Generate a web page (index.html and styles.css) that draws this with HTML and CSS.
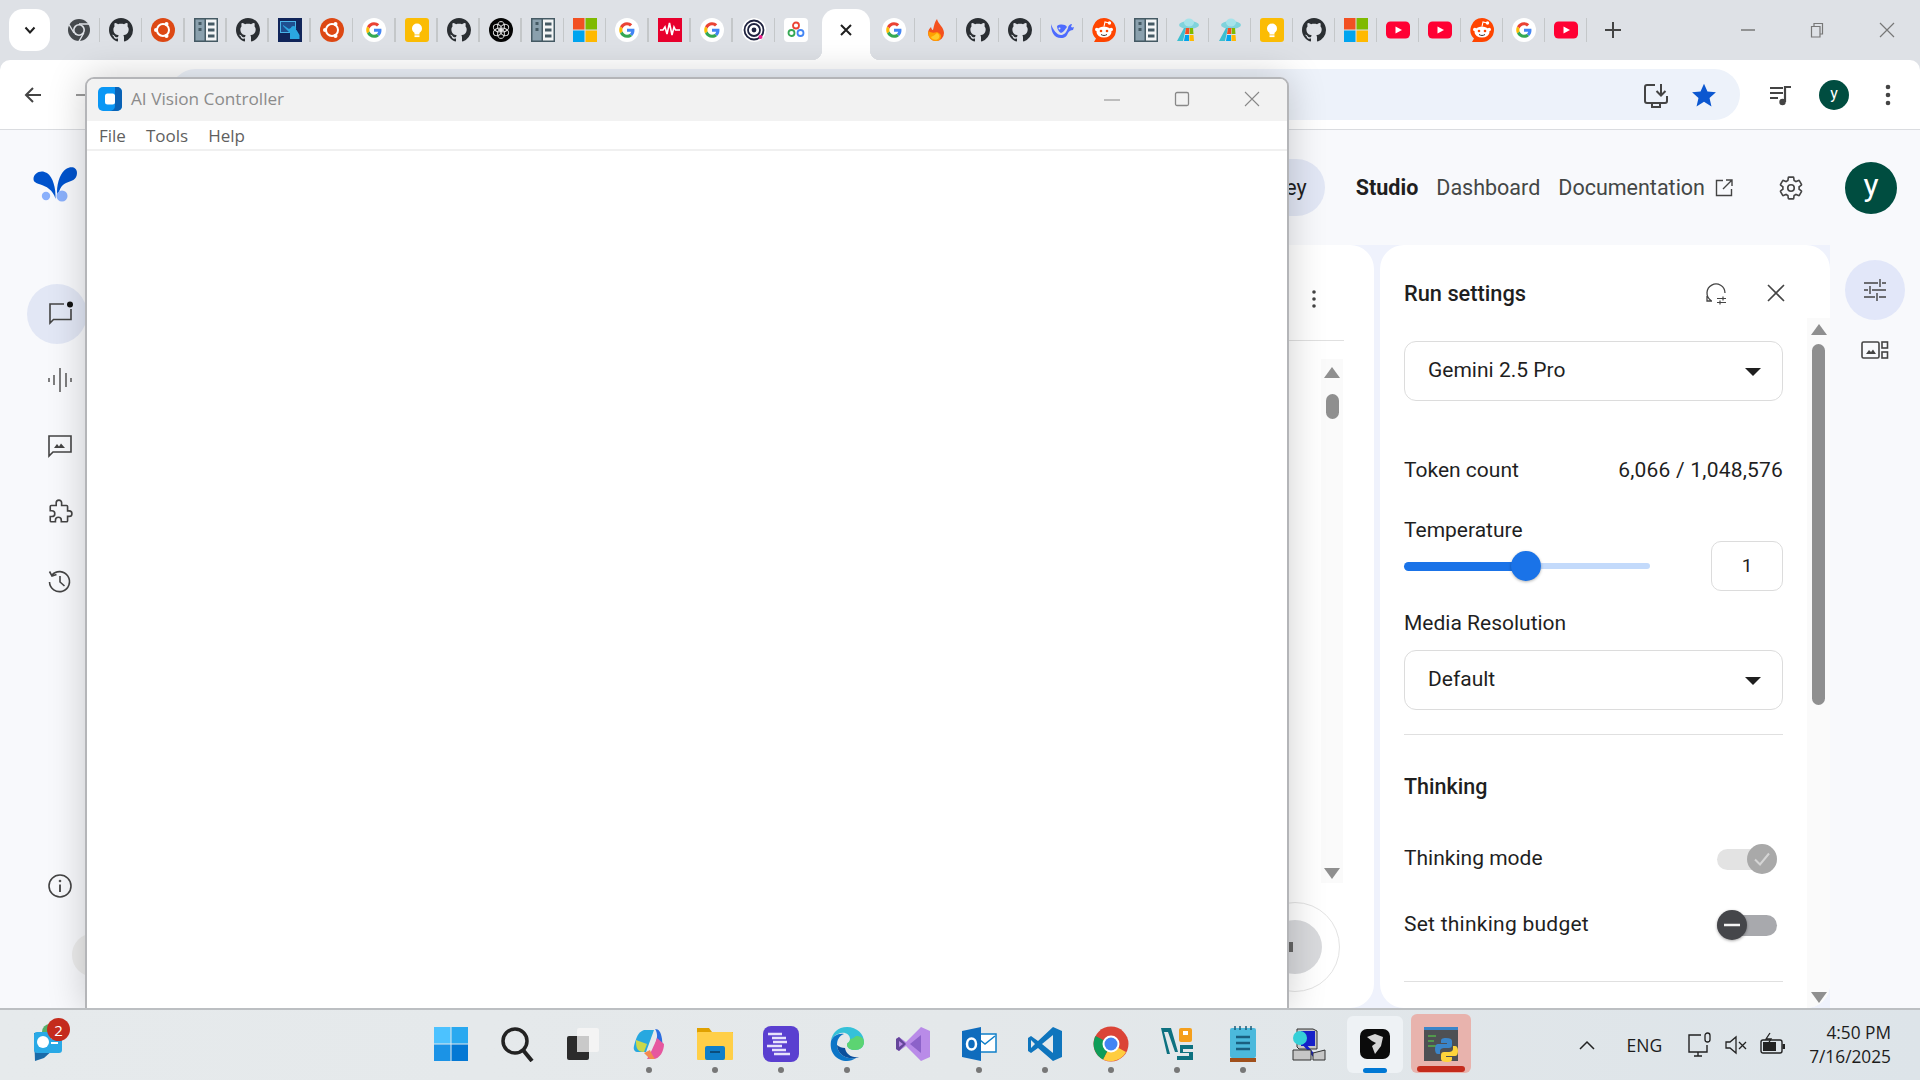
FILE: index.html
```html
<!DOCTYPE html>
<html lang="en">

<head>
  <meta charset="UTF-8">
  <title>AI Vision Controller</title>
  <link rel="stylesheet" href="styles.css">
</head>

<body>
  <!-- favicon and app icon sprites -->
  <svg class="sprites" xmlns="http://www.w3.org/2000/svg">
    <symbol id="gh" viewBox="0 0 16 16">
      <path fill="#2b2f33" d="M8 0C3.58 0 0 3.58 0 8c0 3.54 2.29 6.53 5.47 7.59.4.07.55-.17.55-.38 0-.19-.01-.82-.01-1.49-2.01.37-2.53-.49-2.69-.94-.09-.23-.48-.94-.82-1.13-.28-.15-.68-.52-.01-.53.63-.01 1.08.58 1.23.82.72 1.21 1.87.87 2.33.66.07-.52.28-.87.51-1.07-1.78-.2-3.64-.89-3.64-3.95 0-.87.31-1.59.82-2.15-.08-.2-.36-1.02.08-2.12 0 0 .67-.21 2.2.82.64-.18 1.32-.27 2-.27s1.36.09 2 .27c1.53-1.04 2.2-.82 2.2-.82.44 1.1.16 1.92.08 2.12.51.56.82 1.27.82 2.15 0 3.07-1.87 3.75-3.65 3.95.29.25.54.73.54 1.48 0 1.07-.01 1.93-.01 2.2 0 .21.15.46.55.38A8.013 8.013 0 0016 8c0-4.42-3.58-8-8-8z" />
    </symbol>
    <symbol id="google" viewBox="0 0 24 24">
      <circle cx="12" cy="12" r="12" fill="#fff" />
      <g transform="translate(4.2 4.2) scale(.325)">
        <path fill="#EA4335" d="M24 9.5c3.54 0 6.71 1.22 9.21 3.6l6.85-6.85C35.9 2.38 30.47 0 24 0 14.62 0 6.51 5.38 2.56 13.22l7.98 6.19C12.43 13.72 17.74 9.5 24 9.5z" />
        <path fill="#4285F4" d="M46.98 24.55c0-1.57-.15-3.09-.38-4.55H24v9.02h12.94c-.58 2.96-2.26 5.48-4.78 7.18l7.73 6c4.51-4.18 7.09-10.36 7.09-17.65z" />
        <path fill="#FBBC05" d="M10.53 28.59c-.48-1.45-.76-2.99-.76-4.59s.27-3.14.76-4.59l-7.98-6.19C.92 16.46 0 20.12 0 24c0 3.88.92 7.54 2.56 10.78l7.97-6.19z" />
        <path fill="#34A853" d="M24 48c6.48 0 11.93-2.13 15.89-5.81l-7.73-6c-2.15 1.45-4.92 2.3-8.16 2.3-6.26 0-11.57-4.22-13.47-9.91l-7.98 6.19C6.51 42.62 14.62 48 24 48z" />
      </g>
    </symbol>
    <symbol id="chromedark" viewBox="0 0 24 24">
      <circle cx="12" cy="12" r="11" fill="#45494d" />
      <circle cx="12" cy="12" r="6" fill="#dee1e6" />
      <circle cx="12" cy="12" r="4.4" fill="#45494d" />
      <path d="M12 6h10M7 15L2 6.5M16.8 15l-5 8.6" stroke="#dee1e6" stroke-width="1.4" />
    </symbol>
    <symbol id="ubuntu" viewBox="0 0 24 24">
      <circle cx="12" cy="12" r="12" fill="#dd4814" />
      <circle cx="12" cy="12" r="6" fill="none" stroke="#fff" stroke-width="2" />
      <circle cx="5" cy="12" r="2" fill="#fff" />
      <circle cx="15.5" cy="5.9" r="2" fill="#fff" />
      <circle cx="15.5" cy="18.1" r="2" fill="#fff" />
    </symbol>
    <symbol id="tile" viewBox="0 0 24 24">
      <rect width="24" height="24" fill="#455a64" />
      <rect x="1.5" y="1.5" width="9" height="21" fill="#8aa0ad" />
      <rect x="12" y="1.5" width="10.5" height="21" fill="#f3f5f6" />
      <path d="M4.5 4h3v3h-3zM4.5 10h3v3h-3zM14 4.5h6.5v3H14zM14 10.5h6.5v3H14zM14 16.5h6.5v3H14z" fill="#455a64" />
    </symbol>
    <symbol id="board" viewBox="0 0 24 24">
      <rect width="24" height="24" fill="#11255a" />
      <rect x="2.5" y="3.5" width="15" height="11" fill="#1f4f8f" stroke="#49b3e8" />
      <circle cx="15.5" cy="10.5" r="2.6" fill="#2ba6e0" />
      <path d="M5 7l6 4 1.5-1 3 2h3l3 5v4H12v-6L5 8z" fill="#2ba6e0" />
    </symbol>
    <symbol id="keep" viewBox="0 0 24 24">
      <rect width="24" height="24" rx="3" fill="#fbbc04" />
      <circle cx="12" cy="10.5" r="5" fill="#fff" />
      <rect x="9.5" y="14" width="5" height="2.5" fill="#fff" />
      <rect x="9.5" y="17.3" width="5" height="1.8" fill="#fff" />
    </symbol>
    <symbol id="openai" viewBox="0 0 24 24">
      <circle cx="12" cy="12" r="12" fill="#050505" />
      <g fill="none" stroke="#e8e8e8" stroke-width="1">
        <ellipse cx="12" cy="8.2" rx="3.4" ry="4.6" />
        <ellipse cx="12" cy="8.2" rx="3.4" ry="4.6" transform="rotate(60 12 12)" />
        <ellipse cx="12" cy="8.2" rx="3.4" ry="4.6" transform="rotate(120 12 12)" />
        <ellipse cx="12" cy="8.2" rx="3.4" ry="4.6" transform="rotate(180 12 12)" />
        <ellipse cx="12" cy="8.2" rx="3.4" ry="4.6" transform="rotate(240 12 12)" />
        <ellipse cx="12" cy="8.2" rx="3.4" ry="4.6" transform="rotate(300 12 12)" />
      </g>
    </symbol>
    <symbol id="ms" viewBox="0 0 24 24">
      <rect width="11.5" height="11.5" fill="#f25022" />
      <rect x="12.5" width="11.5" height="11.5" fill="#7fba00" />
      <rect y="12.5" width="11.5" height="11.5" fill="#00a4ef" />
      <rect x="12.5" y="12.5" width="11.5" height="11.5" fill="#ffb900" />
    </symbol>
    <symbol id="wave" viewBox="0 0 24 24">
      <rect width="24" height="24" fill="#e8002d" />
      <path d="M2 12h3l2-3 2 7 2.500-11 2.500 12 2-8 1.500 3H22" fill="none" stroke="#fff" stroke-width="1.600" />
    </symbol>
    <symbol id="target" viewBox="0 0 24 24">
      <circle cx="12" cy="12" r="12" fill="#fff" />
      <circle cx="12" cy="12" r="9.500" fill="none" stroke="#1f2340" stroke-width="1.800" />
      <circle cx="12" cy="12" r="6" fill="none" stroke="#1f2340" stroke-width="1.800" />
      <circle cx="12" cy="12" r="2.400" fill="#1f2340" />
      <circle cx="18.500" cy="19" r="2" fill="#ee1d8c" />
    </symbol>
    <symbol id="loops" viewBox="0 0 24 24">
      <rect width="24" height="24" rx="4" fill="#fff" />
      <circle cx="12" cy="7.500" r="3" fill="none" stroke="#ea4335" stroke-width="1.800" />
      <circle cx="7.500" cy="15" r="3" fill="none" stroke="#34a853" stroke-width="1.800" />
      <circle cx="16.500" cy="15" r="3" fill="none" stroke="#4285f4" stroke-width="1.800" />
    </symbol>
    <symbol id="fire" viewBox="0 0 24 24">
      <path d="M13 1c1 5 7 8 7 14a8 8 0 0 1-16 0c0-3 2-5 3-6 .5 2 1 3 2 3 1-3 1-7 4-11z" fill="#f4511e" />
      <path d="M4.500 13c-1 5 2 10 7.500 10 3 0 5-2 5-5 0-2-2-3-4-4-3 1-6 1-8.500-1z" fill="#ffa000" />
      <path d="M7 19c1 3 6 4 8 1 1-2 0-4-2-5-2 2-4 3-6 4z" fill="#ffca28" />
    </symbol>
    <symbol id="whale" viewBox="0 0 24 24">
      <path d="M1 6c0 8 3 14 10 14 4 0 6-2 7-5 1-2 3-3 5-3l1-3c-1 .5-2 .5-3 0l1-3c-2 0-4 2-4 4-2 5-4 7-7 7C7 17 3 12 1 6z" fill="#4d6bfe" />
      <path d="M7 8c3-2 8-2 10 1-2 2-3 5-6 6-2-1-4-4-4-7z" fill="#4d6bfe" />
      <circle cx="9.500" cy="10.500" r="1" fill="#dee1e6" />
    </symbol>
    <symbol id="reddit" viewBox="0 0 24 24">
      <path d="M12 0a12 12 0 0 1 0 24H2l2-3.500A12 12 0 0 1 12 0z" fill="#ff4500" />
      <ellipse cx="12" cy="14" rx="7.500" ry="5.500" fill="#fff" />
      <circle cx="4.800" cy="11.500" r="1.800" fill="#fff" />
      <circle cx="19.200" cy="11.500" r="1.800" fill="#fff" />
      <circle cx="9" cy="13" r="1.300" fill="#ff4500" />
      <circle cx="15" cy="13" r="1.300" fill="#ff4500" />
      <path d="M9 16.500c2 1.300 4 1.300 6 0" stroke="#333" fill="none" />
      <path d="M12 8.500L13 4l4 1" stroke="#fff" fill="none" stroke-width="1.100" />
      <circle cx="17.500" cy="5" r="1.700" fill="#fff" />
    </symbol>
    <symbol id="ufo" viewBox="0 0 24 24">
      <ellipse cx="13" cy="7" rx="10" ry="4" fill="#7fd3dc" />
      <ellipse cx="13" cy="4.500" rx="5" ry="4" fill="#a6e3ea" />
      <path d="M8 10l-7 13h6l3-13z" fill="#3cbfd0" />
      <path d="M10 10h3.500l-.5 6H9z" fill="#f25022" />
      <path d="M14 10h3l.5 6h-4z" fill="#7fba00" />
      <path d="M9 17h4v6H8z" fill="#00a4ef" />
      <path d="M13.500 17h4l.5 6h-4.500z" fill="#ffb900" />
    </symbol>
    <symbol id="yt" viewBox="0 0 24 24">
      <rect y="3.500" width="24" height="17" rx="4.500" fill="#ff0033" />
      <path d="M9.500 8.500l6.500 3.500-6.500 3.500z" fill="#fff" />
    </symbol>
  </svg>

  <!-- Tab strip -->
  <div class="tabstrip">
    <button class="tab-search">
      <svg width="14" height="14" viewBox="0 0 14 14"><path d="M2.500 4.500L7 9.500l4.500-5" fill="none" stroke="#1f1f1f" stroke-width="2" /></svg>
    </button>
    <div class="tabs tabs-left">
      <div class="tab"><svg class="fav"><use href="#chromedark" /></svg></div>
      <div class="tab"><svg class="fav"><use href="#gh" /></svg></div>
      <div class="tab"><svg class="fav"><use href="#ubuntu" /></svg></div>
      <div class="tab"><svg class="fav"><use href="#tile" /></svg></div>
      <div class="tab"><svg class="fav"><use href="#gh" /></svg></div>
      <div class="tab"><svg class="fav"><use href="#board" /></svg></div>
      <div class="tab"><svg class="fav"><use href="#ubuntu" /></svg></div>
      <div class="tab"><svg class="fav"><use href="#google" /></svg></div>
      <div class="tab"><svg class="fav"><use href="#keep" /></svg></div>
      <div class="tab"><svg class="fav"><use href="#gh" /></svg></div>
      <div class="tab"><svg class="fav"><use href="#openai" /></svg></div>
      <div class="tab"><svg class="fav"><use href="#tile" /></svg></div>
      <div class="tab"><svg class="fav"><use href="#ms" /></svg></div>
      <div class="tab"><svg class="fav"><use href="#google" /></svg></div>
      <div class="tab"><svg class="fav"><use href="#wave" /></svg></div>
      <div class="tab"><svg class="fav"><use href="#google" /></svg></div>
      <div class="tab"><svg class="fav"><use href="#target" /></svg></div>
      <div class="tab tab-last"><svg class="fav"><use href="#loops" /></svg></div>
    </div>
    <div class="tab-active">
      <svg width="16" height="16" viewBox="0 0 16 16"><path d="M3 3l10 10M13 3L3 13" stroke="#1f1f1f" stroke-width="2" /></svg>
    </div>
    <div class="tabs tabs-right">
      <div class="tab"><svg class="fav"><use href="#google" /></svg></div>
      <div class="tab"><svg class="fav"><use href="#fire" /></svg></div>
      <div class="tab"><svg class="fav"><use href="#gh" /></svg></div>
      <div class="tab"><svg class="fav"><use href="#gh" /></svg></div>
      <div class="tab"><svg class="fav"><use href="#whale" /></svg></div>
      <div class="tab"><svg class="fav"><use href="#reddit" /></svg></div>
      <div class="tab"><svg class="fav"><use href="#tile" /></svg></div>
      <div class="tab"><svg class="fav"><use href="#ufo" /></svg></div>
      <div class="tab"><svg class="fav"><use href="#ufo" /></svg></div>
      <div class="tab"><svg class="fav"><use href="#keep" /></svg></div>
      <div class="tab"><svg class="fav"><use href="#gh" /></svg></div>
      <div class="tab"><svg class="fav"><use href="#ms" /></svg></div>
      <div class="tab"><svg class="fav"><use href="#yt" /></svg></div>
      <div class="tab"><svg class="fav"><use href="#yt" /></svg></div>
      <div class="tab"><svg class="fav"><use href="#reddit" /></svg></div>
      <div class="tab"><svg class="fav"><use href="#google" /></svg></div>
      <div class="tab"><svg class="fav"><use href="#yt" /></svg></div>
    </div>
    <svg class="new-tab" width="18" height="18" viewBox="0 0 18 18"><path d="M9 1v16M1 9h16" stroke="#444" stroke-width="2" /></svg>
    <div class="win-controls">
      <svg width="14" height="14" viewBox="0 0 14 14"><path d="M0 7h14" stroke="#777" stroke-width="1.500" /></svg>
      <svg width="14" height="16" viewBox="0 0 14 16"><path d="M1.500 4.500h8.500v10.500H1.500zM4 4.500V1.500h8.500v10.500H10" fill="none" stroke="#777" stroke-width="1.200" /></svg>
      <svg width="16" height="16" viewBox="0 0 16 16"><path d="M1 1l14 14M15 1L1 15" stroke="#777" stroke-width="1.200" /></svg>
    </div>
  </div>

  <!-- Browser toolbar -->
  <div class="toolbar">
    <svg class="tool-back" width="20" height="20" viewBox="0 0 20 20"><path d="M18 10H3M10 3l-7 7 7 7" fill="none" stroke="#444" stroke-width="2" /></svg>
    <svg class="tool-forward" width="20" height="20" viewBox="0 0 20 20"><path d="M8 10h9" stroke="#999" stroke-width="2" /></svg>
    <div class="omnibox">
      <svg width="28" height="28" viewBox="0 0 28 28"><path d="M13 4H5a2 2 0 0 0-2 2v14a2 2 0 0 0 2 2h18a2 2 0 0 0 2-2v-5M19 3v11M14.500 10l4.500 4.500 4.500-4.500M10 26h8v-4h-8z" fill="none" stroke="#444" stroke-width="2" /></svg>
      <svg width="26" height="26" viewBox="0 0 24 24"><path d="M12 1.500l3.200 7.300 7.800.7-5.900 5.200 1.800 7.800L12 18.300l-6.900 4.200 1.800-7.800L1 9.500l7.800-.7z" fill="#0b57d0" /></svg>
    </div>
    <svg class="tool-queue" width="24" height="24" viewBox="0 0 24 24"><path d="M1 5h13M1 10h13M1 15h8" stroke="#444" stroke-width="2.200" /><path d="M16 19V4h6" fill="none" stroke="#444" stroke-width="2.200" /><circle cx="13.500" cy="19" r="3.200" fill="#444" /></svg>
    <div class="tool-avatar">y</div>
    <svg class="tool-menu" width="6" height="24" viewBox="0 0 6 24"><circle cx="3" cy="4" r="2.300" fill="#444" /><circle cx="3" cy="12" r="2.300" fill="#444" /><circle cx="3" cy="20" r="2.300" fill="#444" /></svg>
  </div>

  <!-- AI Studio page behind the desktop window -->
  <div class="page">
    <aside class="sidenav">
      <svg class="logo" width="44" height="35" viewBox="0 0 44 35">
        <path d="M.5 12C.5 6 8 2 14 6c6 4 9 15 8.500 26-2-9-10-13-15-14.500C3 16 .5 15 .5 12z" fill="#0053cc" />
        <path d="M44 6c0 7-6 8-11 10-5 2-7.500 8-8.500 16-2-14 2.500-26 8.500-30 5-3 11-2 11 4z" fill="#0053cc" />
        <circle cx="13" cy="29" r="4.200" fill="#8ab0fb" />
        <circle cx="29" cy="29" r="5.500" fill="#8ab0fb" />
      </svg>
      <div class="nav-item nav-item-on">
        <svg width="26" height="26" viewBox="0 0 26 26"><path d="M17 3H3v19l3.500-3.500H24V8" fill="none" stroke="#444" stroke-width="1.600" /><circle cx="23" cy="3.500" r="3" fill="#111" /></svg>
      </div>
      <div class="nav-item">
        <svg width="26" height="26" viewBox="0 0 26 26"><path d="M2 11v4M7 8v10M13 1v24M19 6v14M24 11v4" stroke="#555" stroke-width="1.500" /></svg>
      </div>
      <div class="nav-item">
        <svg width="26" height="26" viewBox="0 0 26 26"><path d="M2 3h22v16H6l-4 4z" fill="none" stroke="#444" stroke-width="1.600" /><path d="M7 15l3-4 2 2.500 2-3 4 4.500z" fill="#444" /></svg>
      </div>
      <div class="nav-item">
        <svg width="26" height="26" viewBox="0 0 24 24"><path d="M20.500 11H19V7a1 1 0 0 0-1-1h-4.500V3.500a2.500 2.500 0 0 0-5 0V6H4a1 1 0 0 0-1 1v3.800h1.500a2.700 2.700 0 0 1 0 5.400H3V20a1 1 0 0 0 1 1h3.800v-1.500a2.700 2.700 0 0 1 5.400 0V21H18a1 1 0 0 0 1-1v-4h1.500a2.500 2.500 0 0 0 0-5z" fill="none" stroke="#444" stroke-width="1.500" /></svg>
      </div>
      <div class="nav-item">
        <svg width="26" height="26" viewBox="0 0 26 26"><path d="M5 7a10 10 0 1 1-2.500 7M2.500 3.500L5 8l4.500-1.500M13 8v6l4.500 4" fill="none" stroke="#444" stroke-width="1.600" /></svg>
      </div>
      <div class="nav-item nav-info">
        <svg width="26" height="26" viewBox="0 0 26 26"><circle cx="13" cy="13" r="11" fill="none" stroke="#444" stroke-width="1.600" /><path d="M13 11.500V19" stroke="#555" stroke-width="2" /><circle cx="13" cy="8" r="1.300" fill="#555" /></svg>
      </div>
      <div class="nav-bubble"></div>
    </aside>

    <div class="studio">
      <div class="topbar">
        <div class="key-pill">Get API key</div>
        <a class="top-link top-link-on">Studio</a>
        <a class="top-link">Dashboard</a>
        <a class="top-link">Documentation</a>
        <svg class="top-ext" width="18" height="18" viewBox="0 0 18 18"><path d="M8 1.500H1.500v15h15V10M11 1h6v6M17 1L8 10" fill="none" stroke="#444" stroke-width="1.400" /></svg>
        <svg class="top-gear" width="26" height="26" viewBox="0 0 24 24"><path d="M19.430 12.980c.04-.32.07-.64.07-.98s-.03-.66-.07-.98l2.110-1.650c.19-.15.24-.42.12-.64l-2-3.460c-.12-.22-.39-.3-.61-.22l-2.490 1c-.52-.4-1.080-.73-1.690-.98l-.38-2.650C14.460 2.180 14.250 2 14 2h-4c-.25 0-.46.18-.49.42l-.38 2.650c-.61.25-1.170.59-1.690.98l-2.490-1c-.23-.09-.49 0-.61.22l-2 3.460c-.13.22-.07.49.12.64l2.110 1.650c-.04.32-.07.65-.07.98s.03.66.07.98l-2.110 1.650c-.19.15-.24.42-.12.64l2 3.460c.12.22.39.3.61.22l2.490-1c.52.4 1.080.73 1.690.98l.38 2.650c.03.24.24.42.49.42h4c.25 0 .46-.18.49-.42l.38-2.650c.61-.25 1.170-.59 1.690-.98l2.490 1c.23.09.49 0 .61-.22l2-3.460c.12-.22.07-.49-.12-.64l-2.110-1.650z" fill="none" stroke="#444" stroke-width="1.500" /><circle cx="12" cy="12" r="3" fill="none" stroke="#444" stroke-width="1.500" /></svg>
        <div class="top-avatar">y</div>
      </div>

      <div class="panels">
        <section class="chat-panel">
          <div class="chat-head">
            <svg width="4" height="18" viewBox="0 0 4 18"><circle cx="2" cy="2" r="1.800" fill="#444" /><circle cx="2" cy="9" r="1.800" fill="#444" /><circle cx="2" cy="16" r="1.800" fill="#444" /></svg>
          </div>
          <div class="chat-scroll">
            <svg width="16" height="11" viewBox="0 0 16 11"><path d="M8 0l8 11H0z" fill="#8f8f8f" /></svg>
            <div class="chat-thumb"></div>
            <svg class="chat-down" width="16" height="11" viewBox="0 0 16 11"><path d="M8 11L0 0h16z" fill="#8f8f8f" /></svg>
          </div>
          <div class="run-ring">
            <div class="run-btn"><i class="run-mark"></i></div>
          </div>
        </section>

        <section class="settings-panel">
          <div class="settings-body">
            <div class="settings-head">
              <h2>Run settings</h2>
              <svg class="reset-icon" width="24" height="24" viewBox="0 0 24 24"><path d="M7 19.500A9 9 0 1 1 21 12M3 15v5h5" fill="none" stroke="#444" stroke-width="1.300" /><path d="M13 17.500h9M13 21.500h9M19 15.500v4M16 19.500v4" stroke="#444" stroke-width="1.200" /></svg>
              <svg class="close-icon" width="18" height="18" viewBox="0 0 18 18"><path d="M1 1l16 16M17 1L1 17" stroke="#444" stroke-width="1.600" /></svg>
            </div>
            <div class="select">
              <span>Gemini 2.5 Pro</span>
              <i class="caret"></i>
            </div>
            <div class="row token-row">
              <span>Token count</span>
              <span class="token-value">6,066 / 1,048,576</span>
            </div>
            <div class="field-label temp-label">Temperature</div>
            <div class="slider-row">
              <div class="slider">
                <div class="slider-fill"></div>
                <div class="slider-thumb"></div>
                <div class="slider-rest"></div>
              </div>
              <div class="num-box">1</div>
            </div>
            <div class="field-label media-label">Media Resolution</div>
            <div class="select media-select">
              <span>Default</span>
              <i class="caret"></i>
            </div>
            <hr class="rule rule-a">
            <h3>Thinking</h3>
            <div class="row toggle-row mode-row">
              <span>Thinking mode</span>
              <div class="toggle toggle-on">
                <div class="toggle-knob">
                  <svg width="18" height="18" viewBox="0 0 18 18"><path d="M2 9.500l5 5L16 3.500" fill="none" stroke="#d5d5d5" stroke-width="2" /></svg>
                </div>
              </div>
            </div>
            <div class="row toggle-row budget-row">
              <span>Set thinking budget</span>
              <div class="toggle toggle-off">
                <div class="toggle-knob">
                  <svg width="18" height="18" viewBox="0 0 18 18"><path d="M1 9h16" stroke="#f4f4f4" stroke-width="2.500" /></svg>
                </div>
              </div>
            </div>
            <hr class="rule rule-b">
          </div>
          <div class="settings-scroll">
            <svg width="16" height="11" viewBox="0 0 16 11"><path d="M8 0l8 11H0z" fill="#8f8f8f" /></svg>
            <div class="settings-thumb"></div>
            <svg class="settings-down" width="16" height="11" viewBox="0 0 16 11"><path d="M8 11L0 0h16z" fill="#8f8f8f" /></svg>
          </div>
        </section>

        <aside class="rail">
          <div class="rail-item rail-item-on">
            <svg width="24" height="24" viewBox="0 0 24 24"><path d="M1 5h14M19 5h4M17 1v8M1 12h4M9 12h14M7 8v8M1 19h11M16 19h7M14 15v8" fill="none" stroke="#444" stroke-width="1.400" /></svg>
          </div>
          <div class="rail-item">
            <svg width="28" height="22" viewBox="0 0 28 22"><rect x="1" y="3" width="17" height="16" rx="1.500" fill="none" stroke="#444" stroke-width="1.600" /><path d="M5 15l3-4 2 2 2-2.500 3 4.500z" fill="#444" /><rect x="21" y="3" width="5.500" height="6" fill="none" stroke="#444" stroke-width="1.600" /><rect x="21" y="13" width="5.500" height="6" fill="none" stroke="#444" stroke-width="1.600" /></svg>
          </div>
        </aside>
      </div>
    </div>
  </div>

  <!-- Windows taskbar -->
  <footer class="taskbar">
    <div class="tb-widget">
      <svg width="40" height="46" viewBox="0 0 40 46">
        <path d="M6 14h20v16l-10 9-9 3z" fill="#1a6aa8" />
        <rect x="6" y="13" width="28" height="21" rx="3" fill="#29a9e6" />
        <circle cx="15" cy="23" r="6" fill="#fff" />
        <path d="M23 19h7M23 24h7" stroke="#fff" stroke-width="2" />
        <path d="M14 13a8 8 0 0 1 8-8l4 8z" fill="#55b06a" />
      </svg>
      <div class="tb-badge">2</div>
    </div>
    <div class="tb-apps">
      <div class="tb-app">
        <svg class="tb-icon" viewBox="0 0 36 36"><path d="M1 1h16.500v16.500H1z" fill="#4cc2ff" /><path d="M18.500 1H35v16.500H18.500z" fill="#29a9f0" /><path d="M1 18.500h16.500V35H1z" fill="#1b93e6" /><path d="M18.500 18.500H35V35H18.500z" fill="#0478d4" /></svg>
      </div>
      <div class="tb-app">
        <svg class="tb-icon" viewBox="0 0 36 36"><circle cx="16" cy="15" r="12" fill="none" stroke="#222" stroke-width="3.500" /><path d="M24 24l9 11" stroke="#222" stroke-width="4" /></svg>
      </div>
      <div class="tb-app">
        <svg class="tb-icon" viewBox="0 0 36 36"><rect x="12" y="2" width="22" height="24" rx="2" fill="#f4f4f4" /><rect x="2" y="10" width="22" height="24" rx="2" fill="#2b2b2b" /><rect x="12" y="10" width="12" height="16" fill="#c9c9c9" /></svg>
      </div>
      <div class="tb-app tb-on">
        <svg class="tb-icon" viewBox="0 0 36 36"><path d="M13 4c-6 2-8 8-10 16-1 4 1 6 4 6h8l8-22z" fill="#27a8e0" /><path d="M5 14c0 6 0 12 8 12l3-8z" fill="#c9d84a" /><path d="M24 3c4 0 6 3 7 10 1 9 1 14-4 17-2 2-7 3-10 3 4-5 7-10 9-22 .5-3-1-7-2-8z" fill="#2c6de0" /><path d="M26 12c-3 8-7 16-10 21h6c7 0 11-8 11-15z" fill="#e6579f" /><path d="M13 27c2 2 4 4 6 6h5c-2-3-4-6-5-9z" fill="#f28b50" /></svg>
      </div>
      <div class="tb-app tb-on">
        <svg class="tb-icon" viewBox="0 0 36 36"><path d="M0 2h12l3 4H36v4H0z" fill="#e0a100" /><rect y="6" width="36" height="28" rx="1" fill="#ffcf48" /><rect x="8" y="20" width="20" height="14" rx="2" fill="#0f7fc9" /><rect x="13" y="25" width="10" height="2" fill="#0b4d7c" /></svg>
      </div>
      <div class="tb-app tb-on">
        <svg class="tb-icon" viewBox="0 0 36 36"><rect width="36" height="36" rx="8" fill="#5a3fd0" /><path d="M5 8h14M9 12h14M10 16h14M4 20h15M9 24h14M11 28h16" stroke="#e7e2fb" stroke-width="2.500" /></svg>
      </div>
      <div class="tb-app tb-on">
        <svg class="tb-icon" viewBox="0 0 36 36"><path d="M18 1c10 0 17 7 17 15 0 5-4 8-9 8-4 0-8-2-8-5 0-3 3-2 3-6C21 8 15 5 9 8 6 9 3 12 2 15 3 7 9 1 18 1z" fill="#35c1d8" /><path d="M35 16c0 5-4 8-9 8-4 0-8-2-8-5 0-3 3-2 3-6 2 0 4-1 6-3 5 0 8 2 8 6z" fill="#5cd472" /><path d="M2 15c2-5 7-8 13-7-5 2-7 6-7 11 0 8 8 15 19 13-3 2-6 3-9 3C8 35 0 27 2 15z" fill="#0c75c7" /><path d="M8 19c0 8 8 15 19 13 1 0 2-1 3-1-8 1-13-3-14-9-3 0-6-1-8-3z" fill="#0b4f9c" /></svg>
      </div>
      <div class="tb-app">
        <svg class="tb-icon" viewBox="0 0 36 36"><path d="M26 1l9 4v26l-9 4-15-15-7 5-3-2V13l3-2 7 5z" fill="#b98be8" /><path d="M26 9v18L15 18z" fill="#8c62c9" /><path d="M1 13l3-2 7 7-7 7-3-2z" fill="#65469a" /><path d="M4 15l4 3-4 3z" fill="#b98be8" /></svg>
      </div>
      <div class="tb-app tb-on">
        <svg class="tb-icon" viewBox="0 0 36 36"><rect x="13" y="8" width="22" height="18" fill="#fff" stroke="#0f7fc9" stroke-width="1.500" /><path d="M14 10l10 8 10-8" fill="none" stroke="#0f7fc9" stroke-width="1.500" /><path d="M1 5l19-4v34L1 31z" fill="#0f6cbd" /><ellipse cx="10.500" cy="18" rx="4.500" ry="5.500" fill="none" stroke="#fff" stroke-width="2.500" /></svg>
      </div>
      <div class="tb-app tb-on">
        <svg class="tb-icon" viewBox="0 0 36 36"><path d="M26 1l9 4v26l-9 4-15-13-7 5-3-2V12l3-2 7 5z" fill="#0f75bd" /><path d="M26 9v18L15 18z" fill="#e4e9ec" /><path d="M4 14l4 4-4 4z" fill="#e4e9ec" /></svg>
      </div>
      <div class="tb-app tb-on">
        <svg class="tb-icon" viewBox="0 0 36 36"><circle cx="18" cy="18" r="17.500" fill="#db4437" /><path d="M18 18L33 26A17.500 17.500 0 0 1 10 33.500z" fill="#ffcd40" /><path d="M18 18L10 33.500A17.500 17.500 0 0 1 2.500 10z" fill="#0f9d58" /><circle cx="18" cy="18" r="8.500" fill="#fff" /><circle cx="18" cy="18" r="6.500" fill="#4285f4" /></svg>
      </div>
      <div class="tb-app tb-on">
        <svg class="tb-icon" viewBox="0 0 36 36"><path d="M2 2h10l7 24h-3L9 6H5l6 22h-3z" fill="#0d7180" /><rect x="20" y="2" width="13" height="14" rx="2" fill="#f59f1c" /><rect x="24" y="5" width="5" height="4" fill="#fff" /><path d="M21 19h13v4H24v3h10v8H18v-4h12v-3H21z" fill="#0d7180" /></svg>
      </div>
      <div class="tb-app tb-on">
        <svg class="tb-icon" viewBox="0 0 36 36"><rect x="5" y="2" width="26" height="30" rx="2" fill="#4bb9dc" /><path d="M10 0v4M15 0v4M21 0v4M26 0v4" stroke="#1c5c78" stroke-width="1.500" /><path d="M11 11h14M11 17h14M11 23h14" stroke="#1a5f80" stroke-width="2.500" /><rect x="5" y="32" width="26" height="4" fill="#a0501c" /></svg>
      </div>
      <div class="tb-app">
        <svg class="tb-icon" viewBox="0 0 36 36"><path d="M6 3h16l4 2v18H8L6 21z" fill="#c6c6c6" stroke="#333" /><rect x="10" y="5" width="14" height="15" fill="#1620c8" /><circle cx="9" cy="12" r="7" fill="#35d0d8" /><path d="M13 18l12 14" stroke="#1620c8" stroke-width="3" /><path d="M2 24h18v10H2zM22 27l12-3v10H22z" fill="#c6c6c6" stroke="#333" /></svg>
      </div>
      <div class="tb-app tb-active">
        <svg class="tb-icon" viewBox="0 0 36 36"><rect x="3" y="3" width="30" height="30" rx="7" fill="#0b0b0b" /><path d="M10 11l8-3 8 3-2 9-6 8-3-8 4-3-4-2z" fill="#d6d6d6" /></svg>
      </div>
      <div class="tb-app tb-python">
        <svg class="tb-icon" viewBox="0 0 36 36"><rect x="1" y="1" width="34" height="34" fill="#4e5054" /><rect x="1" y="1" width="34" height="3" fill="#3a85c9" /><path d="M5 10h8M5 15h6M5 20h9" stroke="#54b04a" stroke-width="1.500" /><path d="M23 12c-4 0-5 1-5 3v2h6v1h-9c-2 0-3 2-3 5s1 5 3 5h2v-3c0-2 2-3 4-3h5c2 0 3-1 3-3v-4c0-2-2-3-6-3z" fill="#3a85c9" /><path d="M24 36c4 0 5-1 5-3v-2h-6v-1h9c2 0 3-2 3-5s-1-5-3-5h-2v3c0 2-2 3-4 3h-5c-2 0-3 1-3 3v4c0 2 2 3 6 3z" fill="#ffd43b" /></svg>
      </div>
    </div>
    <div class="tray">
      <svg class="tray-chevron" width="16" height="10" viewBox="0 0 16 10"><path d="M1 9l7-7 7 7" fill="none" stroke="#222" stroke-width="1.500" /></svg>
      <span class="tray-lang">ENG</span>
      <svg class="tray-net" width="26" height="26" viewBox="0 0 26 26"><path d="M14 3H2v17h18v-7M7 24h8M11 20v4" fill="none" stroke="#222" stroke-width="1.400" /><rect x="18" y="1" width="5" height="9" rx="2.500" fill="none" stroke="#222" stroke-width="1.300" /></svg>
      <svg class="tray-vol" width="24" height="24" viewBox="0 0 24 24"><path d="M2 9v6h4l6 5V4L6 9zM15 9l7 7M22 9l-7 7" fill="none" stroke="#222" stroke-width="1.300" /></svg>
      <svg class="tray-batt" width="26" height="26" viewBox="0 0 26 26"><rect x="1" y="8" width="21" height="13" rx="2" fill="none" stroke="#222" stroke-width="1.400" /><rect x="3" y="10" width="13" height="9" fill="#222" /><rect x="22.500" y="12" width="2.500" height="5" fill="#222" /><path d="M10 1L6 7h5l-3 5" fill="none" stroke="#222" stroke-width="1.300" /></svg>
      <div class="clock">
        <div>4:50 PM</div>
        <div>7/16/2025</div>
      </div>
    </div>
  </footer>

  <!-- Desktop app window floating over the browser -->
  <div class="app-window">
    <div class="app-title">
      <svg width="24" height="24" viewBox="0 0 24 24"><rect width="24" height="24" rx="5" fill="#0a97f5" /><path d="M17 0h2a5 5 0 0 1 5 5v14a5 5 0 0 1-5 5h-7a5 5 0 0 0 5-5z" fill="#0a62b5" /><rect x="7" y="6.500" width="10" height="11" rx="2.500" fill="#fff" /></svg>
      <span>AI Vision Controller</span>
      <div class="app-controls">
        <svg width="16" height="16" viewBox="0 0 16 16"><path d="M0 9h16" stroke="#999" stroke-width="1.200" /></svg>
        <svg width="16" height="16" viewBox="0 0 16 16"><rect x="1.500" y="1.500" width="13" height="13" rx="1.500" fill="none" stroke="#888" stroke-width="1.300" /></svg>
        <svg width="16" height="16" viewBox="0 0 16 16"><path d="M1 1l14 14M15 1L1 15" stroke="#888" stroke-width="1.100" /></svg>
      </div>
    </div>
    <nav class="app-menu">
      <a>File</a>
      <a>Tools</a>
      <a>Help</a>
    </nav>
    <div class="app-canvas"></div>
  </div>
</body>

</html>
```

FILE: styles.css
```css
* {
  box-sizing: border-box;
}

body {
  margin: 0;
  height: 100vh;
  overflow: hidden;
  display: flex;
  flex-direction: column;
  position: relative;
  font-family: Roboto, "Liberation Sans", sans-serif;
  color: #1f1f1f;
  background: #dee1e6;
}

.sprites {
  display: none;
}

/* Tab strip */
.tabstrip {
  height: 60px;
  flex: none;
  display: flex;
  align-items: flex-start;
  padding-left: 9px;
  background: #dee1e6;
}

.tab-search {
  width: 41px;
  height: 42px;
  margin-top: 9px;
  border: none;
  border-radius: 14px;
  background: #fff;
  display: flex;
  align-items: center;
  justify-content: center;
  padding: 0;
}

.tabs {
  display: flex;
  height: 60px;
  align-items: center;
}

.tabs-left {
  margin-left: 8px;
}

.tab {
  width: 42px;
  height: 24px;
  display: flex;
  align-items: center;
  padding-left: 9px;
}

.tabs-left .tab {
  width: 42.2px;
}

.tab::after {
  content: "";
  width: 2px;
  height: 24px;
  margin-left: 7.5px;
  background: #c4c7c9;
}

.tab-last::after {
  display: none;
}

.fav {
  width: 24px;
  height: 24px;
  flex: none;
}

.tab-active {
  width: 48px;
  height: 51px;
  margin-top: 9px;
  margin-left: 4.5px;
  background: #fff;
  border-radius: 14px 14px 0 0;
  display: flex;
  align-items: center;
  justify-content: center;
  padding-bottom: 9px;
  position: relative;
}

.tab-active::before,
.tab-active::after {
  content: "";
  position: absolute;
  bottom: 0;
  width: 10px;
  height: 10px;
}

.tab-active::before {
  left: -10px;
  background: radial-gradient(circle at 0 0, transparent 10px, #fff 10.5px);
}

.tab-active::after {
  right: -10px;
  background: radial-gradient(circle at 100% 0, transparent 10px, #fff 10.5px);
}

.tabs-right {
  margin-left: 3.5px;
}

.new-tab {
  margin: 21px 0 0 17px;
}

.win-controls {
  display: flex;
  align-items: center;
  height: 60px;
  margin-left: 118.5px;
  gap: 55px;
}

/* Toolbar */
.toolbar {
  height: 70px;
  flex: none;
  display: flex;
  align-items: center;
  background: #fff;
  border-bottom: 1px solid #dadce0;
  border-radius: 10px 10px 0 0;
  padding-left: 23px;
}

.tool-forward {
  margin-left: 25px;
}

.omnibox {
  width: 1570px;
  height: 51px;
  margin-left: 82px;
  background: #edf2fa;
  border-radius: 26px;
  display: flex;
  align-items: center;
  justify-content: flex-end;
  gap: 21px;
  padding-right: 23px;
}

.tool-queue {
  margin-left: 29px;
}

.tool-avatar {
  width: 30px;
  height: 30px;
  margin-left: 26px;
  border-radius: 50%;
  background: #004d40;
  color: #fff;
  font-size: 16px;
  display: flex;
  align-items: center;
  justify-content: center;
  padding-bottom: 3px;
}

.tool-menu {
  margin-left: 36px;
}

/* Studio page */
.page {
  flex: 1;
  min-height: 0;
  display: flex;
  background: #f8f9fc;
}

.sidenav {
  width: 110px;
  flex: none;
  display: flex;
  flex-direction: column;
  position: relative;
  padding: 37px 0 89px 27px;
}

.logo {
  margin: 0 0 79px 6px;
}

.nav-item {
  width: 60px;
  height: 66px;
  display: flex;
  align-items: center;
  justify-content: center;
  flex: none;
  padding-left: 6px;
}

.nav-item:nth-child(6) {
  margin-top: 3px;
}

.nav-item svg {
  flex: none;
}

.nav-item-on {
  position: relative;
  z-index: 0;
}

.nav-item-on::before {
  content: "";
  position: absolute;
  top: 3px;
  left: 0;
  width: 60px;
  height: 60px;
  border-radius: 50%;
  background: #e2e7f5;
  z-index: -1;
}

.nav-info {
  margin-top: auto;
}

.nav-bubble {
  position: absolute;
  left: 72px;
  top: 803px;
  width: 44px;
  height: 44px;
  border-radius: 50%;
  background: #ececec;
}

.studio {
  flex: 1;
  min-width: 0;
  display: flex;
  flex-direction: column;
}

.topbar {
  height: 115px;
  flex: none;
  display: flex;
  align-items: center;
  justify-content: flex-end;
  padding-right: 23px;
  font-size: 21.5px;
}

.key-pill {
  height: 57px;
  padding: 0 18px;
  margin-right: 31px;
  border-radius: 29px;
  background: #e2e7f5;
  display: flex;
  align-items: center;
}

.top-link {
  color: #444746;
  margin-right: 18px;
}

.top-link-on {
  color: #1f1f1f;
  font-weight: 700;
}

.top-link:nth-of-type(3) {
  margin-right: 10px;
}

.top-gear {
  margin-left: 45px;
}

.top-avatar {
  width: 52px;
  height: 52px;
  margin-left: 41px;
  border-radius: 50%;
  background: #004d40;
  color: #fff;
  font-size: 32px;
  display: flex;
  align-items: center;
  justify-content: center;
  padding-bottom: 6px;
}

.panels {
  flex: 1;
  min-height: 0;
  display: flex;
  gap: 6px;
  background: #eff2fc;
}

/* Chat panel, mostly behind the window */
.chat-panel {
  flex: 1;
  min-width: 0;
  background: #fff;
  border-radius: 24px;
  display: flex;
  flex-direction: column;
  align-items: flex-end;
}

.chat-head {
  height: 96px;
  flex: none;
  border-bottom: 1px solid #e0e0e0;
  display: flex;
  align-items: center;
  justify-content: flex-end;
  padding: 12px 28px 0 0;
  width: calc(100% - 30px);
  align-self: flex-start;
}

.chat-scroll {
  width: 22px;
  height: 524px;
  margin: 18px 31px 0 0;
  background: #fafafa;
  display: flex;
  flex-direction: column;
  align-items: center;
  padding: 8px 0 4px;
  flex: none;
}

.chat-thumb {
  width: 13px;
  height: 25px;
  margin-top: 16px;
  border-radius: 7px;
  background: #8f8f8f;
}

.chat-down {
  margin-top: auto;
}

.run-ring {
  width: 90px;
  height: 90px;
  margin: 19px 34px 0 0;
  flex: none;
  border: 1px solid #e3e3e3;
  border-radius: 50%;
  display: flex;
  align-items: center;
  justify-content: center;
}

.run-btn {
  width: 54px;
  height: 54px;
  border-radius: 50%;
  background: #d9dadd;
  display: flex;
  align-items: center;
  padding-left: 19px;
}

.run-mark {
  width: 6px;
  height: 10px;
  background: #666;
}

/* Run settings panel */
.settings-panel {
  width: 450px;
  flex: none;
  display: flex;
  background: #fff;
  border-radius: 24px;
  padding-left: 24px;
  overflow: hidden;
}

.settings-body {
  width: 379px;
  flex: none;
  font-size: 21px;
}

.settings-head {
  height: 96px;
  display: flex;
  align-items: center;
}

h2 {
  margin: 0;
  font-size: 21.8px;
  font-weight: 500;
}

.reset-icon {
  margin-left: auto;
  margin-right: 39px;
}

.close-icon {
  margin-right: -2px;
}

.select {
  height: 60px;
  padding: 0 21px 2px 23px;
  border: 1px solid #dcdcdc;
  border-radius: 12px;
  display: flex;
  align-items: center;
  justify-content: space-between;
}

.caret {
  width: 0;
  height: 0;
  border-left: 8px solid transparent;
  border-right: 8px solid transparent;
  border-top: 8px solid #1f1f1f;
  margin-top: 3px;
}

.row {
  display: flex;
  align-items: center;
  justify-content: space-between;
}

.token-row {
  height: 40px;
  margin-top: 49px;
}

.token-value {
  letter-spacing: 0.2px;
}

.field-label {
  height: 24px;
  display: flex;
  align-items: center;
}

.temp-label {
  margin-top: 28px;
  height: 23px;
}

.slider-row {
  height: 50px;
  display: flex;
  align-items: center;
  justify-content: space-between;
}

.slider {
  width: 246px;
  height: 30px;
  display: flex;
  align-items: center;
}

.slider-fill {
  width: 110px;
  height: 9px;
  background: #1a73e8;
  border-radius: 5px 0 0 5px;
}

.slider-thumb {
  width: 30px;
  height: 30px;
  margin-left: -3px;
  flex: none;
  border-radius: 50%;
  background: #1a73e8;
  box-shadow: 0 1px 3px rgba(0, 0, 0, 0.3);
  position: relative;
}

.slider-rest {
  flex: 1;
  height: 6px;
  background: #c3dafb;
  border-radius: 0 3px 3px 0;
}

.num-box {
  width: 72px;
  height: 50px;
  padding-bottom: 2px;
  border: 1px solid #dcdcdc;
  border-radius: 10px;
  display: flex;
  align-items: center;
  justify-content: center;
  font-size: 19px;
}

.media-label {
  margin-top: 20px;
}

.media-select {
  margin-top: 15px;
}

.rule {
  margin: 0;
  border: none;
  height: 1px;
  background: #e0e0e0;
}

.rule-a {
  margin-top: 24px;
}

h3 {
  height: 24px;
  margin: 39px 0 0;
  font-size: 21.5px;
  font-weight: 500;
  display: flex;
  align-items: center;
}

.toggle-row {
  height: 40px;
}

.toggle-row span {
  padding-bottom: 2px;
}

.budget-row span {
  letter-spacing: 0.25px;
}

.mode-row {
  margin-top: 41px;
}

.budget-row {
  margin-top: 26px;
}

.rule-b {
  margin-top: 36px;
}

.toggle {
  width: 60px;
  height: 21px;
  margin-right: 6px;
  border-radius: 11px;
  display: flex;
  align-items: center;
}

.toggle-knob {
  width: 30px;
  height: 30px;
  flex: none;
  border-radius: 50%;
  display: flex;
  align-items: center;
  justify-content: center;
}

.toggle-on {
  background: #e3e3e3;
  justify-content: flex-end;
}

.toggle-on .toggle-knob {
  background: #a9a9a9;
}

.toggle-off {
  background: #a8a9ad;
}

.toggle-off .toggle-knob {
  background: #45464a;
  box-shadow: 0 1px 3px rgba(0, 0, 0, 0.35);
}

.settings-scroll {
  width: 23px;
  margin: 73px 0 0 24px;
  background: #fafafa;
  display: flex;
  flex-direction: column;
  align-items: center;
  padding: 6px 0 5px;
}

.settings-thumb {
  width: 13px;
  height: 361px;
  margin-top: 9px;
  border-radius: 7px;
  background: #8f8f8f;
  flex: none;
}

.settings-down {
  margin-top: auto;
}

/* Right rail */
.rail {
  width: 90px;
  flex: none;
  margin-left: -6px;
  padding: 15px 0 0 15px;
  background: #f8f9fc;
}

.rail-item {
  width: 60px;
  height: 60px;
  display: flex;
  align-items: center;
  justify-content: center;
}

.rail-item-on {
  border-radius: 50%;
  background: #e2e7f9;
}

/* Taskbar */
.taskbar {
  height: 72px;
  flex: none;
  display: flex;
  position: relative;
  z-index: 10;
  border-top: 2px solid #bcbfc2;
  background: linear-gradient(90deg, #e6eaec, #e4e8ea 50%, #dde4e9);
  font-family: "Open Sans", "Liberation Sans", sans-serif;
  color: #1c1c1c;
}

.tb-widget {
  width: 90px;
  padding: 9px 0 0 28px;
  position: relative;
  flex: none;
}

.tb-badge {
  position: absolute;
  left: 47px;
  top: 8px;
  width: 23px;
  height: 23px;
  border-radius: 50%;
  background: #c42b1c;
  color: #fff;
  font-size: 15px;
  display: flex;
  align-items: center;
  justify-content: center;
}

.tb-apps {
  display: flex;
  margin-left: 327.5px;
}

.tb-app {
  width: 66px;
  height: 70px;
  padding-top: 16px;
  display: flex;
  flex-direction: column;
  align-items: center;
}

.tb-icon {
  width: 36px;
  height: 36px;
  flex: none;
}

.tb-on::after {
  content: "";
  width: 6px;
  height: 6px;
  margin-top: 5px;
  border-radius: 50%;
  background: #777;
}

.tb-active {
  width: 56px;
  height: 57px;
  margin: 6px 5px 0;
  padding-top: 10px;
  background: #eef2f5;
  border-radius: 6px;
}

.tb-active::after {
  content: "";
  width: 24px;
  height: 5px;
  margin-top: 6px;
  border-radius: 3px;
  background: #0078d4;
}

.tb-python {
  width: 60px;
  height: 59px;
  margin: 4px 3px 0;
  padding-top: 12px;
  background: #e8b3ad;
  border-radius: 6px;
}

.tb-python::after {
  content: "";
  width: 48px;
  height: 6px;
  margin-top: 4px;
  border-radius: 3px;
  background: #c42b1c;
}

.tray {
  margin-left: auto;
  padding-right: 29px;
  display: flex;
  align-items: center;
}

.tray-lang {
  margin-left: 32px;
  font-size: 17.5px;
}

.tray-net {
  margin-left: 25px;
}

.tray-vol {
  margin-left: 11px;
}

.tray-batt {
  margin-left: 12px;
}

.clock {
  margin-left: 23px;
  text-align: right;
  font-size: 17.3px;
  line-height: 24px;
}

/* Desktop app window */
.app-window {
  position: absolute;
  left: 85px;
  top: 77px;
  width: 1204px;
  height: 933px;
  z-index: 5;
  display: flex;
  flex-direction: column;
  background: #fff;
  border: 2px solid #b4b5b8;
  border-radius: 9px 9px 0 0;
  box-shadow: 0 0 38px rgba(0, 0, 0, 0.2);
  font-family: "Open Sans", "Liberation Sans", sans-serif;
}

.app-title {
  height: 42px;
  flex: none;
  display: flex;
  align-items: center;
  padding: 0 0 3px 11px;
  background: #f2f2f2;
  border-radius: 7px 7px 0 0;
  font-size: 17.2px;
  color: #8b8b8b;
}

.app-title span {
  margin-left: 9px;
}

.app-controls {
  margin-left: auto;
  margin-right: 27px;
  display: flex;
  align-items: center;
  gap: 54px;
}

.app-menu {
  height: 30px;
  flex: none;
  display: flex;
  align-items: center;
  gap: 20px;
  padding-left: 12px;
  border-bottom: 2px solid #f0f0f0;
  font-size: 17px;
  color: #5f5f5f;
}

.app-canvas {
  flex: 1;
}
```
